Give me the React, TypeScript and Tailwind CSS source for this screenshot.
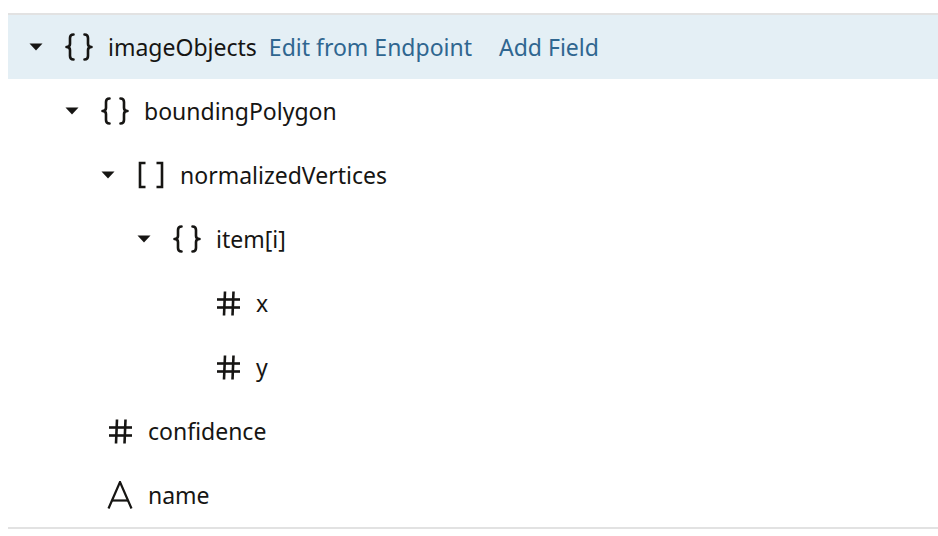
import React from 'react';

type Kind = 'object' | 'array' | 'number' | 'string';

type Node = {
  label: string;
  kind: Kind;
  pad: string;
  expandable?: boolean;
  selected?: boolean;
};

const nodes: Node[] = [
  { label: 'imageObjects', kind: 'object', pad: 'pl-[21px]', expandable: true, selected: true },
  { label: 'boundingPolygon', kind: 'object', pad: 'pl-[57px]', expandable: true },
  { label: 'normalizedVertices', kind: 'array', pad: 'pl-[93px]', expandable: true },
  { label: 'item[i]', kind: 'object', pad: 'pl-[129px]', expandable: true },
  { label: 'x', kind: 'number', pad: 'pl-[207px]' },
  { label: 'y', kind: 'number', pad: 'pl-[207px]' },
  { label: 'confidence', kind: 'number', pad: 'pl-[99px]' },
  { label: 'name', kind: 'string', pad: 'pl-[99px]' },
];

function Caret() {
  return (
    <svg width="14" height="8" viewBox="0 0 14 8" className="shrink-0">
      <polygon points="0.5,0.5 13.5,0.5 7,7.5" fill="#161513" />
    </svg>
  );
}

function TypeIcon({ kind }: { kind: Kind }) {
  if (kind === 'object') {
    return (
      <svg width="28" height="28" viewBox="0 0 28 28" fill="none" stroke="#161513" strokeWidth="2.6" strokeLinecap="round" strokeLinejoin="round">
        <path d="M8.5 1.5 C6 1.5 5 2.5 5 5 V11 C5 13 4 14 1.5 14 C4 14 5 15 5 17 V23 C5 25.5 6 26.5 8.5 26.5" />
        <path d="M19.5 1.5 C22 1.5 23 2.5 23 5 V11 C23 13 24 14 26.5 14 C24 14 23 15 23 17 V23 C23 25.5 22 26.5 19.5 26.5" />
      </svg>
    );
  }
  if (kind === 'array') {
    return (
      <svg width="28" height="28" viewBox="0 0 28 28" fill="none" stroke="#161513" strokeWidth="2.6">
        <path d="M8.5 2 H3 V26 H8.5" />
        <path d="M19.5 2 H25 V26 H19.5" />
      </svg>
    );
  }
  if (kind === 'number') {
    return (
      <svg width="25" height="25" viewBox="0 0 25 25" fill="none" stroke="#161513" strokeWidth="2.6">
        <path d="M9 0.5 L8 24.5" />
        <path d="M17.5 0.5 L16.5 24.5" />
        <path d="M1 8.5 H24" />
        <path d="M1 16.5 H24" />
      </svg>
    );
  }
  return (
    <svg width="26" height="28" viewBox="0 0 26 28" fill="none" stroke="#161513" strokeWidth="2.2">
      <path d="M1.5 27.5 L13 1 L24.5 27.5" />
      <path d="M5 19.5 H21" />
    </svg>
  );
}

function Row({ node }: { node: Node }) {
  return (
    <div
      className={`flex h-16 items-center ${node.pad} ${node.selected ? 'bg-[#e4eff5]' : ''}`}
    >
      {node.expandable ? (
        <>
          <div className="flex w-[14px] justify-center">
            <Caret />
          </div>
          <div className="ml-[22px] flex w-[28px] justify-center">
            <TypeIcon kind={node.kind} />
          </div>
          <span className="ml-[15px] text-[#161513]">{node.label}</span>
        </>
      ) : (
        <>
          <div className="flex w-[26px] justify-center">
            <TypeIcon kind={node.kind} />
          </div>
          <span className="ml-[15px] text-[#161513]">{node.label}</span>
        </>
      )}
      {node.selected && (
        <div className="ml-3 flex items-center gap-[27px] text-[#2f6690]">
          <button type="button">Edit from Endpoint</button>
          <button type="button">Add Field</button>
        </div>
      )}
    </div>
  );
}

export default function App() {
  return (
    <div className="h-[536px] w-[938px] bg-white pt-[13px] pl-2 font-['Noto_Sans',sans-serif] text-[23px]">
      <div className="border-y-2 border-[#e2e2e2]">
        {nodes.map((n) => (
          <Row key={n.label} node={n} />
        ))}
      </div>
    </div>
  );
}
